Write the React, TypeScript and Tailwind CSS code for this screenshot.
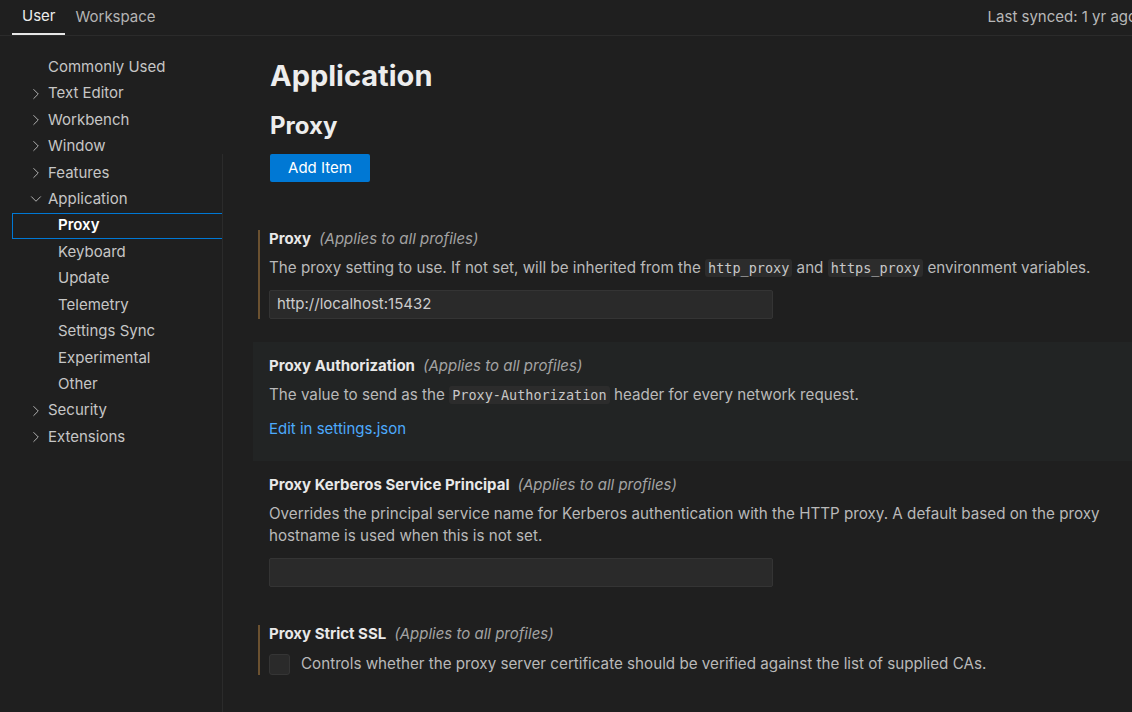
import { ChevronRight, ChevronDown } from "lucide-react";

const font = { fontFamily: "Inter, 'Noto Sans', sans-serif" };

type NavItem = { label: string; depth: 0 | 1; open?: boolean; leaf?: boolean; selected?: boolean };

const nav: NavItem[] = [
  { label: "Commonly Used", depth: 0, leaf: true },
  { label: "Text Editor", depth: 0 },
  { label: "Workbench", depth: 0 },
  { label: "Window", depth: 0 },
  { label: "Features", depth: 0 },
  { label: "Application", depth: 0, open: true },
  { label: "Proxy", depth: 1, selected: true },
  { label: "Keyboard", depth: 1 },
  { label: "Update", depth: 1 },
  { label: "Telemetry", depth: 1 },
  { label: "Settings Sync", depth: 1 },
  { label: "Experimental", depth: 1 },
  { label: "Other", depth: 1 },
  { label: "Security", depth: 0 },
  { label: "Extensions", depth: 0 },
];

function Code({ children }: { children: string }) {
  return (
    <code
      className="rounded-[3px] bg-[#2c2c2c] px-[3px] py-[1px] text-[13.5px] text-[#c8c8c8]"
      style={{ fontFamily: "'DejaVu Sans Mono', monospace" }}
    >
      {children}
    </code>
  );
}

function Title({ name }: { name: string }) {
  return (
    <div className="h-[18px] whitespace-nowrap text-[15px] leading-[18px]">
      <span className="font-bold text-[#e8e8e8]">{name}</span>
      <span className="ml-[8px] italic text-[#a3a3a3]">(Applies to all profiles)</span>
    </div>
  );
}

function Setting({
  modified,
  hover,
  children,
}: {
  modified?: boolean;
  hover?: boolean;
  children: React.ReactNode;
}) {
  return (
    <div className={`pl-[5px] pt-[15px] pb-[23px] pr-4 ${hover ? "bg-[#222424]" : ""}`}>
      <div className={`border-l-2 pl-[9px] ${modified ? "border-[#6b5130]" : "border-transparent"}`}>
        {children}
      </div>
    </div>
  );
}

function Desc({ children }: { children: React.ReactNode }) {
  return <div className="mt-[9px] text-[15.2px] leading-[22px] text-[#b9b9b9]">{children}</div>;
}

function TextInput({ value }: { value?: string }) {
  return (
    <div className="mt-[11px] flex h-[29px] w-[504px] items-center rounded-[2px] border border-[#343434] bg-[#2a2a2a] px-[7px] text-[15px] text-[#cccccc]">
      {value}
    </div>
  );
}

export default function App() {
  return (
    <div className="h-[712px] w-[1132px] overflow-hidden bg-[#1f1f1f] text-[#cccccc]" style={font}>
      <div className="flex h-[36px] items-stretch border-b border-[#2b2b2b] pl-[12px] text-[15px]">
        <div className="flex items-center border-b-2 border-[#e7e7e7] px-[10px] text-[#ececec]">User</div>
        <div className="flex items-center px-[10px] text-[#b4b4b4]">Workspace</div>
        <div className="ml-auto mr-[-5px] flex shrink-0 items-center whitespace-nowrap text-[#b8b8b8]">
          Last synced: 1 yr ago
        </div>
      </div>

      <div className="flex">
        <div className="w-[223px] shrink-0 pt-[18px]">
          {nav.map((n) => (
            <div
              key={n.label}
              className={`flex h-[26.43px] items-center text-[15px] ${
                n.selected
                  ? "ml-[12px] border border-[#0078d4] pl-[45px] font-semibold text-white"
                  : n.depth === 1
                  ? "pl-[58px] text-[#c6c6c6]"
                  : "pl-[26px] text-[#c6c6c6]"
              }`}
            >
              {n.depth === 0 && (
                <span className="mr-[2px] flex w-[20px] justify-center text-[#c0c0c0]">
                  {n.leaf ? null : n.open ? (
                    <ChevronDown size={18} strokeWidth={1.2} />
                  ) : (
                    <ChevronRight size={18} strokeWidth={1.2} />
                  )}
                </span>
              )}
              {n.label}
            </div>
          ))}
        </div>

        <div className="flex-1">
          <div className="pl-[47px] pt-[22px]">
            <div className="h-[36px] text-[29px] font-bold leading-[36px] text-[#ededed]">Application</div>
            <div className="mt-[17px] h-[30px] text-[24px] font-bold leading-[30px] text-[#ededed]">Proxy</div>
          </div>

          <div className="-ml-px mt-[13px] border-l border-[#2b2b2b] pb-[40px]">
            <button className="ml-[47px] h-[28px] w-[100px] rounded-[2px] bg-[#0078d4] text-[15px] text-white">
              Add Item
            </button>
            <div className="mt-[33px] pl-[30px]">
              <Setting modified>
                <Title name="Proxy" />
                <Desc>
                  The proxy setting to use. If not set, will be inherited from the <Code>http_proxy</Code> and{" "}
                  <Code>https_proxy</Code> environment variables.
                </Desc>
                <TextInput value="http://localhost:15432" />
              </Setting>
              <Setting hover>
                <Title name="Proxy Authorization" />
                <Desc>
                  The value to send as the <Code>Proxy-Authorization</Code> header for every network request.
                </Desc>
                <div className="mt-[14px] h-[18px] text-[15px] leading-[18px] text-[#4daafc]">Edit in settings.json</div>
              </Setting>
              <Setting>
                <Title name="Proxy Kerberos Service Principal" />
                <Desc>
                  Overrides the principal service name for Kerberos authentication with the HTTP proxy. A default based
                  on the proxy hostname is used when this is not set.
                </Desc>
                <TextInput />
              </Setting>
              <Setting modified>
                <Title name="Proxy Strict SSL" />
                <div className="mt-[10px] flex h-[22px] items-center">
                  <div className="h-[21px] w-[21px] shrink-0 rounded-[3px] border border-[#353535] bg-[#2a2a2a]" />
                  <span className="ml-[11px] text-[15.2px] text-[#b9b9b9]">
                    Controls whether the proxy server certificate should be verified against the list of supplied CAs.
                  </span>
                </div>
              </Setting>
            </div>
          </div>
        </div>
      </div>
    </div>
  );
}
